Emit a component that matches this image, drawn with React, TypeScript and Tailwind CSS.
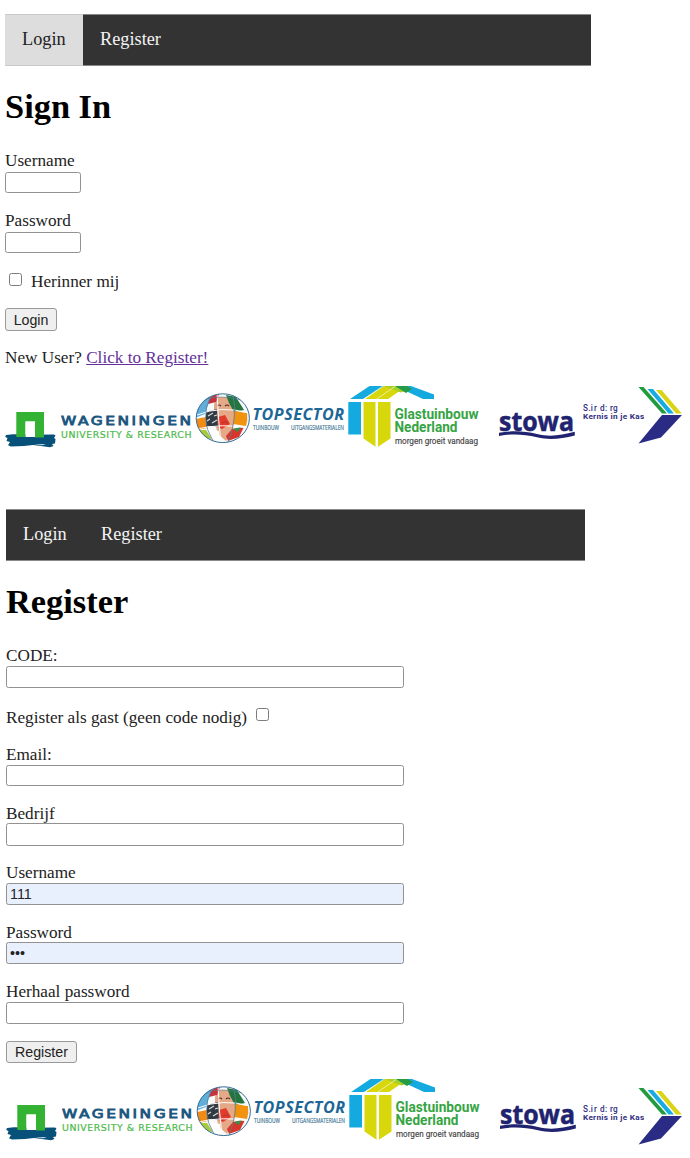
import type { ReactNode } from "react";

function NavBar({ active, className }: { active?: boolean; className: string }) {
  return (
    <nav className={`flex items-stretch border-y border-[#888] bg-[#333] text-[18.3px] text-[#f4f4f4] ${className}`}>
      <a className={`-my-px flex w-[78px] items-center border-y pl-[17px] ${active ? "border-[#c8c8c8] bg-[#ddd] text-[#222]" : "border-transparent"}`}>Login</a>
      <a className="flex items-center pl-[17px]">Register</a>
    </nav>
  );
}

function Title({ children }: { children: ReactNode }) {
  return <h1 className="mt-5 h-10 text-[34.4px] leading-[41px] font-bold text-black">{children}</h1>;
}

function Field({ label, value, type = "text", className, input }: {
  label: string;
  value?: string;
  type?: string;
  className: string;
  input: string;
}) {
  return (
    <label className={`flex flex-col justify-between ${className}`}>
      <span className="block h-5 leading-[22px]">{label}</span>
      <input
        type={type}
        defaultValue={value}
        className={`block rounded-[2.5px] border border-[#929292] px-[3px] pb-px font-['Liberation_Sans',sans-serif] text-[14.3px] leading-4 text-[#222] outline-none ${value ? "bg-[#e8f0fe]" : "bg-white"} ${input}`}
      />
    </label>
  );
}

function Checkbox({ className }: { className: string }) {
  return <input type="checkbox" className={`size-[13px] appearance-none rounded-[2.5px] border border-[#7c7c7c] bg-white ${className}`} />;
}

function Button({ children, className }: { children: ReactNode; className: string }) {
  return (
    <button className={`flex items-center justify-center rounded-[3px] border border-[#999] bg-[#efefef] pt-px font-['Liberation_Sans',sans-serif] text-[14.2px] leading-none text-[#222] ${className}`}>
      {children}
    </button>
  );
}

function Wageningen() {
  return (
    <svg width="190" height="75" viewBox="5 380 190 75" className="shrink-0">
      <path d="M6 435 L13 434.2 L30 434.7 L54 434.5 L55.5 435.5 L54 438 L55.5 439 L55 443.5 L52 444 L53.5 446 L50 447.2 L37 445.6 L33 445 L24 446 L11 446.5 L8 445.3 L10 442 L6.5 441 L7.5 438 L5.2 437 Z" fill="#07507a" />
      <path d="M34 444.8 L46 443.9 L42 445.2 Z" fill="#fff" />
      <path d="M16.3 412 H44 V437.5 H35 V421.5 H25.5 V437 H16.3 Z" fill="#34b233" />
      <path d="M25.5 421.5 H35 V437 H25.5 Z" fill="#fff" />
      <text x="61" y="424.6" textLength="132.5" lengthAdjust="spacingAndGlyphs" letterSpacing="2" fontFamily="DejaVu Sans" fontSize="12.2" fill="#195680" stroke="#195680" strokeWidth=".8">WAGENINGEN</text>
      <text x="61" y="437.5" textLength="131" lengthAdjust="spacingAndGlyphs" letterSpacing=".5" fontFamily="DejaVu Sans" fontSize="8.3" fill="#4dba4b" stroke="#4dba4b" strokeWidth=".2">UNIVERSITY &amp; RESEARCH</text>
    </svg>
  );
}

function Topsector({ id }: { id: string }) {
  return (
    <svg width="152" height="75" viewBox="195 380 152 75" className="shrink-0 overflow-visible">
      <clipPath id={id}><ellipse cx="222.8" cy="418.2" rx="26.8" ry="24.6" /></clipPath>
      <g clipPath={`url(#${id})`}>
        <path d="M195 392 H250 V445 H195Z" fill="#f7fafb" />
        <path d="M195 393 H212 L205 414 L195 418Z" fill="#62aeda" />
        <path d="M196 419 L206 417 L207 428 L198 430Z" fill="#f28b14" />
        <path d="M214 404 L217 397 L228 397 L235 411 L233 430 L226 441 L218 434 L214 420Z" fill="#e6a988" />
        <path d="M209 400 Q212 394 219 394 L216 402 L208 404Z" fill="#c7313c" />
        <path d="M226 395 L236 397 L244 410 L234 412 L229 403Z" fill="#24753d" />
        <path d="M234 411 L247 413 Q248 420 246 426 L233 424Z" fill="#f2930f" />
        <path d="M206 412 L217 409 L218 427 L206 426Z" fill="#323b43" />
        <path d="M208 416 L213 413 M212 423 L217 420 M207 421 L210 419 M214 416 L217 415" stroke="#d6d9d8" strokeWidth="1.2" />
        <path d="M218 417 L225 415 L230 424 L222 429 L218 427Z" fill="#e23a2b" />
        <path d="M232 429 L244 427 L239 437 L228 441 L226 436Z" fill="#d8362a" />
        <path d="M233 429 L241 427 L238 432Z" fill="#35904c" />
        <path d="M199 430 L206 430 L212 439 L204 438Z" fill="#a6c940" />
        <path d="M207 429 L219 431 L220 442 L212 439Z" fill="#fff" />
        <path d="M217 406 q2-2 4 0 M225 406 q2-2 4 0" stroke="#4c2c24" fill="none" strokeWidth="1.1" />
        <path d="M222 423 q4-2 6 0" stroke="#b3382e" fill="none" strokeWidth="1.2" />
        <path d="M197 415 Q221 405 249 413 M197 429 Q223 423 247 428 M217 393 Q218 418 221 443" fill="none" stroke="#fff" strokeWidth="1" />
        <path d="M211 396 Q199 418 213 441 M233 395 Q238 418 228 442" fill="none" stroke="#55809b" strokeWidth=".8" />
        <path d="M203 400 Q220 394 241 400" fill="none" stroke="#55809b" strokeWidth=".6" />
      </g>
      <ellipse cx="222.8" cy="418.2" rx="26.6" ry="24.4" fill="none" stroke="#396e94" strokeWidth="1" />
      <text x="252.5" y="420" textLength="92" lengthAdjust="spacingAndGlyphs" letterSpacing=".5" fontFamily="Open Sans" fontStyle="italic" fontWeight="700" fontSize="15.5" fill="#1d6697">TOPSECTOR</text>
      <g fontFamily="Open Sans" fontSize="7" fill="#3f7796" stroke="#3f7796" strokeWidth=".2">
        <text x="253" y="429.6" textLength="26" lengthAdjust="spacingAndGlyphs">TUINBOUW</text>
        <text x="291" y="429.6" textLength="53" lengthAdjust="spacingAndGlyphs">UITGANGSMATERIALEN</text>
      </g>
    </svg>
  );
}

function Glastuinbouw() {
  return (
    <svg width="145" height="75" viewBox="347 380 145 75" className="shrink-0 overflow-visible">
      <path d="M348.3 402 H361 V434.5 H348.3Z M350 399 L369.5 386 H384 L363 399Z M395 386 H411 L434 394.5 V399 H423Z" fill="#14aae0" />
      <path d="M363.5 402 H375.5 V446.8 L363.5 438.5Z M378 402 H390.5 V438.5 L378 446.8Z M365 399 L384 386 H407 L388 399Z" fill="#d8d70c" />
      <path d="M384 386 H395 L407 390.5 L400.5 392.5Z" fill="#a9ce26" />
      <path d="M395 386 H407 L412 389 L406 393Z" fill="#259b48" />
      <path d="M376 399.5 L395 386.5 M363 399.5 L383 386" stroke="#f5f8dc" strokeWidth=".7" />
      <g fontFamily="Roboto" fontWeight="700" fontSize="14" fill="#36a443">
        <text x="394.5" y="419" textLength="84" lengthAdjust="spacingAndGlyphs">Glastuinbouw</text>
        <text x="394.5" y="431.5" textLength="63" lengthAdjust="spacingAndGlyphs">Nederland</text>
      </g>
      <text x="395" y="444.4" textLength="83" lengthAdjust="spacingAndGlyphs" fontFamily="Roboto" fontSize="9.2" fill="#444" stroke="#444" strokeWidth=".15">morgen groeit vandaag</text>
    </svg>
  );
}

function Stowa() {
  return (
    <svg width="86" height="75" viewBox="492 380 86 75" className="shrink-0">
      <text x="499" y="431.3" textLength="75" lengthAdjust="spacingAndGlyphs" fontFamily="Open Sans" fontWeight="700" fontSize="26" fill="#20236f" stroke="#20236f" strokeWidth=".5">stowa</text>
      <path d="M499 432.8 C513 430.5 524 431 537 434 C550 437.3 561 435.3 574.8 431.8 L574.8 435.4 C561 438.8 550 440.3 537 437.3 C523 434 512 433.5 499 436Z" fill="#20236f" />
    </svg>
  );
}

function KennisInJeKas({ className = "" }: { className?: string }) {
  return (
    <svg width="106" height="75" viewBox="578 380 106 75" className={`shrink-0 ${className}`}>
      <g fontFamily="Roboto" fill="#302d80">
        <g fontSize="8.2" fontWeight="500">
          <text x="583" y="411">S</text>
          <text x="588.5" y="411">.i</text>
          <text x="594" y="411">r</text>
          <text x="600" y="411">d</text>
          <text x="605" y="411">:</text>
          <text x="610" y="411">r</text>
          <text x="613" y="411">g</text>
        </g>
        <text x="583" y="419.3" textLength="61.5" lengthAdjust="spacingAndGlyphs" letterSpacing=".3" fontSize="7.9" fontWeight="700">Kernis in je Kas</text>
      </g>
      <path d="M638.5 387 H643.5 L667 413.5 H662Z" fill="#229b3c" />
      <path d="M647.5 389 H653 L674 413.5 H668.5Z" fill="#16ace2" />
      <path d="M656 390 H661.5 L681.8 413.5 H676Z" fill="#d9d516" />
      <path d="M662 415 H682 L661 437.5 L638.5 443.5Z" fill="#292b84" />
    </svg>
  );
}

function Logos({ id, className, lowered }: { id: string; className: string; lowered?: boolean }) {
  return (
    <div className={`flex h-[75px] ${className}`}>
      <Wageningen />
      <Topsector id={id} />
      <Glastuinbouw />
      <Stowa />
      <KennisInJeKas className={lowered ? "-ml-px mt-2" : ""} />
    </div>
  );
}

export default function App() {
  return (
    <main className="h-[1158px] w-[690px] overflow-hidden bg-white font-['Liberation_Serif',serif] text-[17.2px] text-[#222]">
      <section className="flex h-[509px] flex-col items-start pt-3.5 pl-[5px]">
        <NavBar active className="h-[52px] w-[586px] shrink-0" />
        <Title>Sign In</Title>
        <Field label="Username" className="mt-6 h-[43px]" input="h-[21px] w-[76px]" />
        <Field label="Password" type="password" className="mt-[17px] h-[43px]" input="h-[21px] w-[76px]" />
        <label className="mt-[18px] flex h-5 items-start pl-1 leading-[22px]">
          <Checkbox className="mt-0.5 mr-[9px]" />
          Herinner mij
        </label>
        <Button className="mt-[17px] h-[23px] w-[52px]">Login</Button>
        <p className="mt-4 h-5 leading-[22px]">New User? <a className="text-[#63309a] underline">Click to Register!</a></p>
        <Logos id="globe-login" className="mt-[13px]" />
      </section>
      <section className="flex flex-col items-start pl-1.5">
        <NavBar className="h-[52px] w-[579px] shrink-0" />
        <Title>Register</Title>
        <Field label="CODE:" className="mt-6 h-[43px]" input="h-[22px] w-[398px]" />
        <label className="mt-[19px] flex h-5 items-start leading-[22px]">
          Register als gast (geen code nodig)
          <Checkbox className="mt-px ml-[9px]" />
        </label>
        <Field label="Email:" className="mt-[17px] h-[42px]" input="h-[21px] w-[398px]" />
        <Field label="Bedrijf" className="mt-[17px] h-[43px]" input="h-[23px] w-[398px]" />
        <Field label="Username" value="111" className="mt-4 h-[43px]" input="h-[22px] w-[398px]" />
        <Field label="Password" type="password" value="111" className="mt-[17px] h-[42px]" input="h-[22px] w-[398px]" />
        <Field label="Herhaal password" type="password" className="mt-[17px] h-[43px]" input="h-[22px] w-[398px]" />
        <Button className="mt-[17px] h-[22px] w-[71px]">Register</Button>
        <Logos id="globe-register" className="mt-[10px]" lowered />
      </section>
    </main>
  );
}
